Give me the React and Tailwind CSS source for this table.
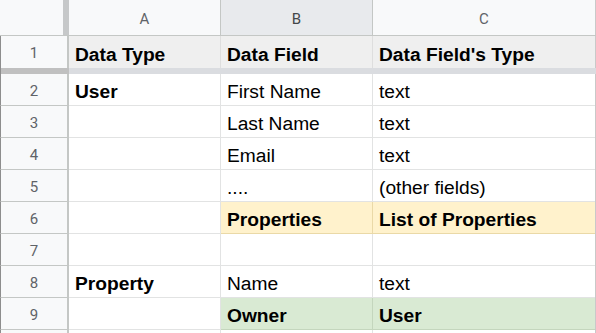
import React from "react";

const rows = [
  { n: 2, a: "User", aBold: true, b: "First Name", c: "text" },
  { n: 3, a: "", b: "Last Name", c: "text" },
  { n: 4, a: "", b: "Email", c: "text" },
  { n: 5, a: "", b: "....", c: "(other fields)" },
  { n: 6, a: "", b: "Properties", c: "List of Properties", tone: "yellow", bold: true },
  { n: 7, a: "", b: "", c: "" },
  { n: 8, a: "Property", aBold: true, b: "Name", c: "text" },
  { n: 9, a: "", b: "Owner", c: "User", tone: "green", bold: true },
  { n: "", a: "", b: "", c: "" },
];

const cellText = "flex items-end pl-[6px] pb-[2px] text-[19.2px] leading-[22px] text-black whitespace-nowrap overflow-hidden font-['Liberation_Sans',Arial,sans-serif]";
const numText = "flex items-center justify-center pt-[3px] text-[15px] text-[#5f6368] font-['Roboto',sans-serif]";

function RowNum({ n }) {
  return (
    <div className={`w-[69px] h-full shrink-0 bg-[#f8f9fa] border-l border-l-[#8d8d8d] border-r-2 border-r-[#c4c7c5] border-b border-b-[#c4c7c5] ${numText}`}>
      {n}
    </div>
  );
}

function DataRow({ r }) {
  const toneBC =
    r.tone === "yellow"
      ? "bg-[#fff2cc] border-[#ead9a7]"
      : r.tone === "green"
      ? "bg-[#d9ead3] border-[#c4d6bd]"
      : "bg-white border-[#e2e3e3]";
  const bw = r.bold ? "font-bold" : "";
  return (
    <div className="flex h-[32px] shrink-0">
      <RowNum n={r.n} />
      <div className={`w-[152px] shrink-0 bg-white border-r border-b border-[#e2e3e3] ${cellText} ${r.aBold ? "font-bold" : ""}`}>
        {r.a}
      </div>
      <div className={`w-[152px] shrink-0 border-r border-b ${toneBC} ${cellText} ${bw}`}>{r.b}</div>
      <div className={`w-[222px] shrink-0 border-b border-r-0 ${toneBC} ${cellText} ${bw}`}>{r.c}</div>
      <div className="w-[2px] shrink-0 bg-[#c9c9c9]" />
      <div className="w-[1px] shrink-0 bg-white border-b border-[#e2e3e3]" />
    </div>
  );
}

export default function App() {
  return (
    <div className="w-[596px] h-[333px] overflow-hidden bg-white flex flex-col">
      {/* column header */}
      <div className="flex h-[36px] shrink-0 border-b border-[#c4c7c5]">
        <div className="w-[69px] shrink-0 bg-[#f8f9fa] border-r-[6px] border-[#c6c8c9]" />
        <div className={`w-[152px] shrink-0 bg-[#f8f9fa] border-r border-[#c4c7c5] ${numText}`}>A</div>
        <div className={`w-[152px] shrink-0 bg-[#e8eaed] border-r border-[#c4c7c5] ${numText} text-[#44474a]`}>B</div>
        <div className={`w-[222px] shrink-0 bg-[#f8f9fa] ${numText}`}>C</div>
        <div className="w-[2px] shrink-0 bg-[#c9c9c9]" />
        <div className="w-[1px] shrink-0 bg-[#f8f9fa]" />
      </div>
      {/* row 1 */}
      <div className="flex h-[32px] shrink-0">
        <div className={`w-[69px] shrink-0 bg-[#f8f9fa] border-l border-l-[#8d8d8d] border-r-2 border-r-[#c4c7c5] ${numText}`}>1</div>
        <div className={`w-[152px] shrink-0 bg-[#efefef] border-r border-[#dedede] font-bold ${cellText}`}>Data Type</div>
        <div className={`w-[152px] shrink-0 bg-[#efefef] border-r border-[#dedede] font-bold ${cellText}`}>Data Field</div>
        <div className={`w-[222px] shrink-0 bg-[#efefef] font-bold ${cellText}`}>Data Field's Type</div>
        <div className="w-[2px] shrink-0 bg-[#c9c9c9]" />
        <div className="w-[1px] shrink-0 bg-[#efefef]" />
      </div>
      {/* frozen separator */}
      <div className="flex h-[6px] shrink-0">
        <div className="w-[69px] shrink-0 bg-[#c0c0c0] border-l border-l-[#8d8d8d]" />
        <div className="flex-1 bg-[#dadce0]" />
      </div>
      {rows.map((r, i) => (
        <DataRow key={i} r={r} />
      ))}
    </div>
  );
}
